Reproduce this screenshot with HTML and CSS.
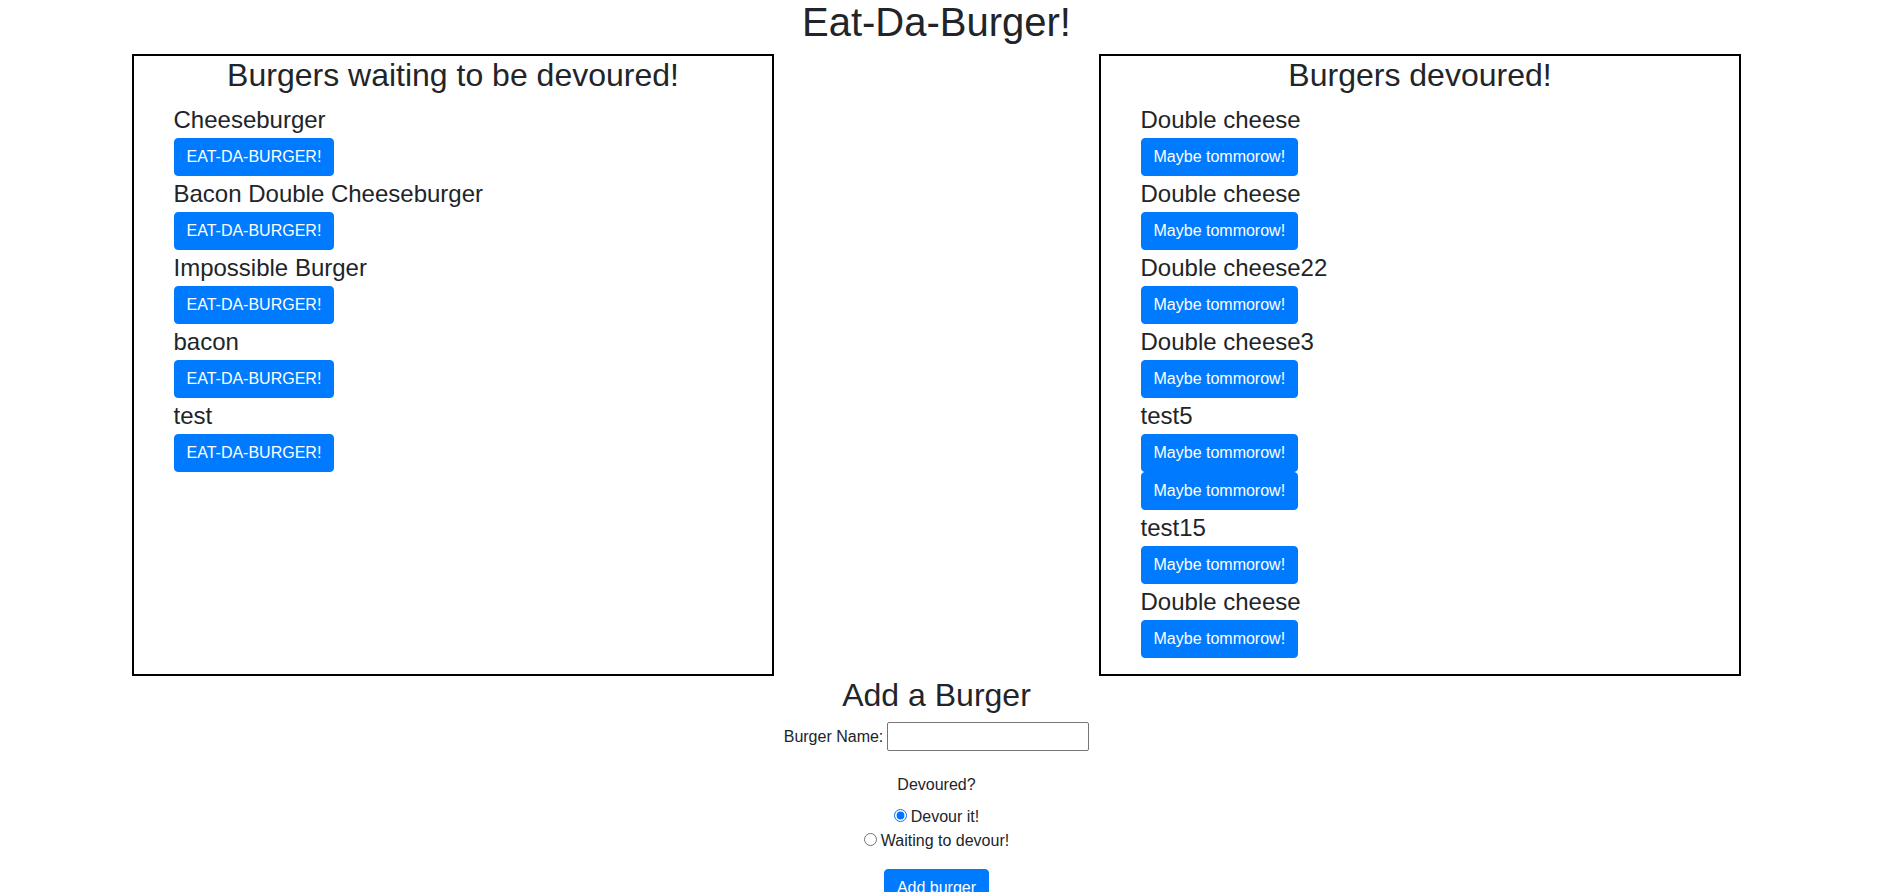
FILE: index.html
```html
<!DOCTYPE html>
<html lang="en">
<head>
<meta charset="utf-8">
<title>Eat-Da-Burger!</title>
<link rel="stylesheet" href="styles.css">
</head>
<body>
<div class="page">
  <h1 class="title">Eat-Da-Burger!</h1>
  <div class="boards">
    <section class="board">
      <h2 class="board-title">Burgers waiting to be devoured!</h2>
      <ul class="burger-list">
        <li class="burger"><div class="burger-name">Cheeseburger</div><button class="btn">EAT-DA-BURGER!</button></li>
        <li class="burger"><div class="burger-name">Bacon Double Cheeseburger</div><button class="btn">EAT-DA-BURGER!</button></li>
        <li class="burger"><div class="burger-name">Impossible Burger</div><button class="btn">EAT-DA-BURGER!</button></li>
        <li class="burger"><div class="burger-name">bacon</div><button class="btn">EAT-DA-BURGER!</button></li>
        <li class="burger"><div class="burger-name">test</div><button class="btn">EAT-DA-BURGER!</button></li>
      </ul>
    </section>
    <section class="board">
      <h2 class="board-title">Burgers devoured!</h2>
      <ul class="burger-list">
        <li class="burger"><div class="burger-name">Double cheese</div><button class="btn">Maybe tommorow!</button></li>
        <li class="burger"><div class="burger-name">Double cheese</div><button class="btn">Maybe tommorow!</button></li>
        <li class="burger"><div class="burger-name">Double cheese22</div><button class="btn">Maybe tommorow!</button></li>
        <li class="burger"><div class="burger-name">Double cheese3</div><button class="btn">Maybe tommorow!</button></li>
        <li class="burger"><div class="burger-name">test5</div><button class="btn">Maybe tommorow!</button></li>
        <li class="burger"><button class="btn">Maybe tommorow!</button></li>
        <li class="burger"><div class="burger-name">test15</div><button class="btn">Maybe tommorow!</button></li>
        <li class="burger"><div class="burger-name">Double cheese</div><button class="btn">Maybe tommorow!</button></li>
      </ul>
    </section>
  </div>
  <form class="add-form">
    <h2 class="add-title">Add a Burger</h2>
    <div class="name-row">
      <label for="bn">Burger Name:</label>
      <input id="bn" class="name-input" type="text">
    </div>
    <p class="question">Devoured?</p>
    <div class="radio-line"><input type="radio" name="dev" id="d1" checked><label for="d1">Devour it!</label></div>
    <div class="radio-line"><input type="radio" name="dev" id="d2"><label for="d2">Waiting to devour!</label></div>
    <button type="button" class="btn add-btn">Add burger</button>
  </form>
</div>
</body>
</html>
```
FILE: styles.css
```css
html, body {
  margin: 0;
  padding: 0;
  background: #fff;
}
body {
  overflow-x: hidden;
  font-family: "Liberation Sans", Arial, sans-serif;
  font-size: 16px;
  line-height: 24px;
  color: #212529;
}
.page {
  width: 1873px;
}
.title {
  margin: 0 0 10px;
  font-size: 40px;
  line-height: 44px;
  font-weight: 400;
  text-align: center;
}
.boards {
  display: flex;
  justify-content: space-between;
  padding: 0 132px;
}
.board {
  width: 642px;
  box-sizing: border-box;
  border: 2px solid #000;
}
.board-title {
  margin: 0 0 8px;
  font-size: 32px;
  line-height: 38px;
  font-weight: 400;
  text-align: center;
}
.burger-list {
  list-style: none;
  margin: 0 0 16px;
  padding: 0 0 0 39.5px;
}
.burger {
  display: flex;
  flex-direction: column;
  align-items: flex-start;
}
.burger-name {
  font-size: 24px;
  line-height: 36px;
}
.btn {
  font-family: "Liberation Sans", Arial, sans-serif;
  font-size: 16px;
  line-height: 24px;
  padding: 6px 12px;
  border: 1px solid #007bff;
  background: #007bff;
  color: #fff;
  border-radius: 4px;
  cursor: pointer;
}
.add-form {
  text-align: center;
}
.add-title {
  margin: 0 0 8px;
  font-size: 32px;
  line-height: 38px;
  font-weight: 400;
}
.name-row {
  display: flex;
  justify-content: center;
  align-items: center;
  gap: 4px;
  margin-bottom: 22px;
}
.name-input {
  width: 202px;
  height: 29px;
  box-sizing: border-box;
  border: 1px solid #767676;
  border-radius: 2px;
  font-family: inherit;
  font-size: 16px;
  padding: 1px 2px;
  margin: 0;
}
.question {
  margin: 0 0 8px;
}
.radio-line {
  padding-right: 5px;
}
.radio-line input {
  width: 13px;
  height: 13px;
  margin: 3px 4px 0 5px;
}
.add-btn {
  margin-top: 16px;
}
```
